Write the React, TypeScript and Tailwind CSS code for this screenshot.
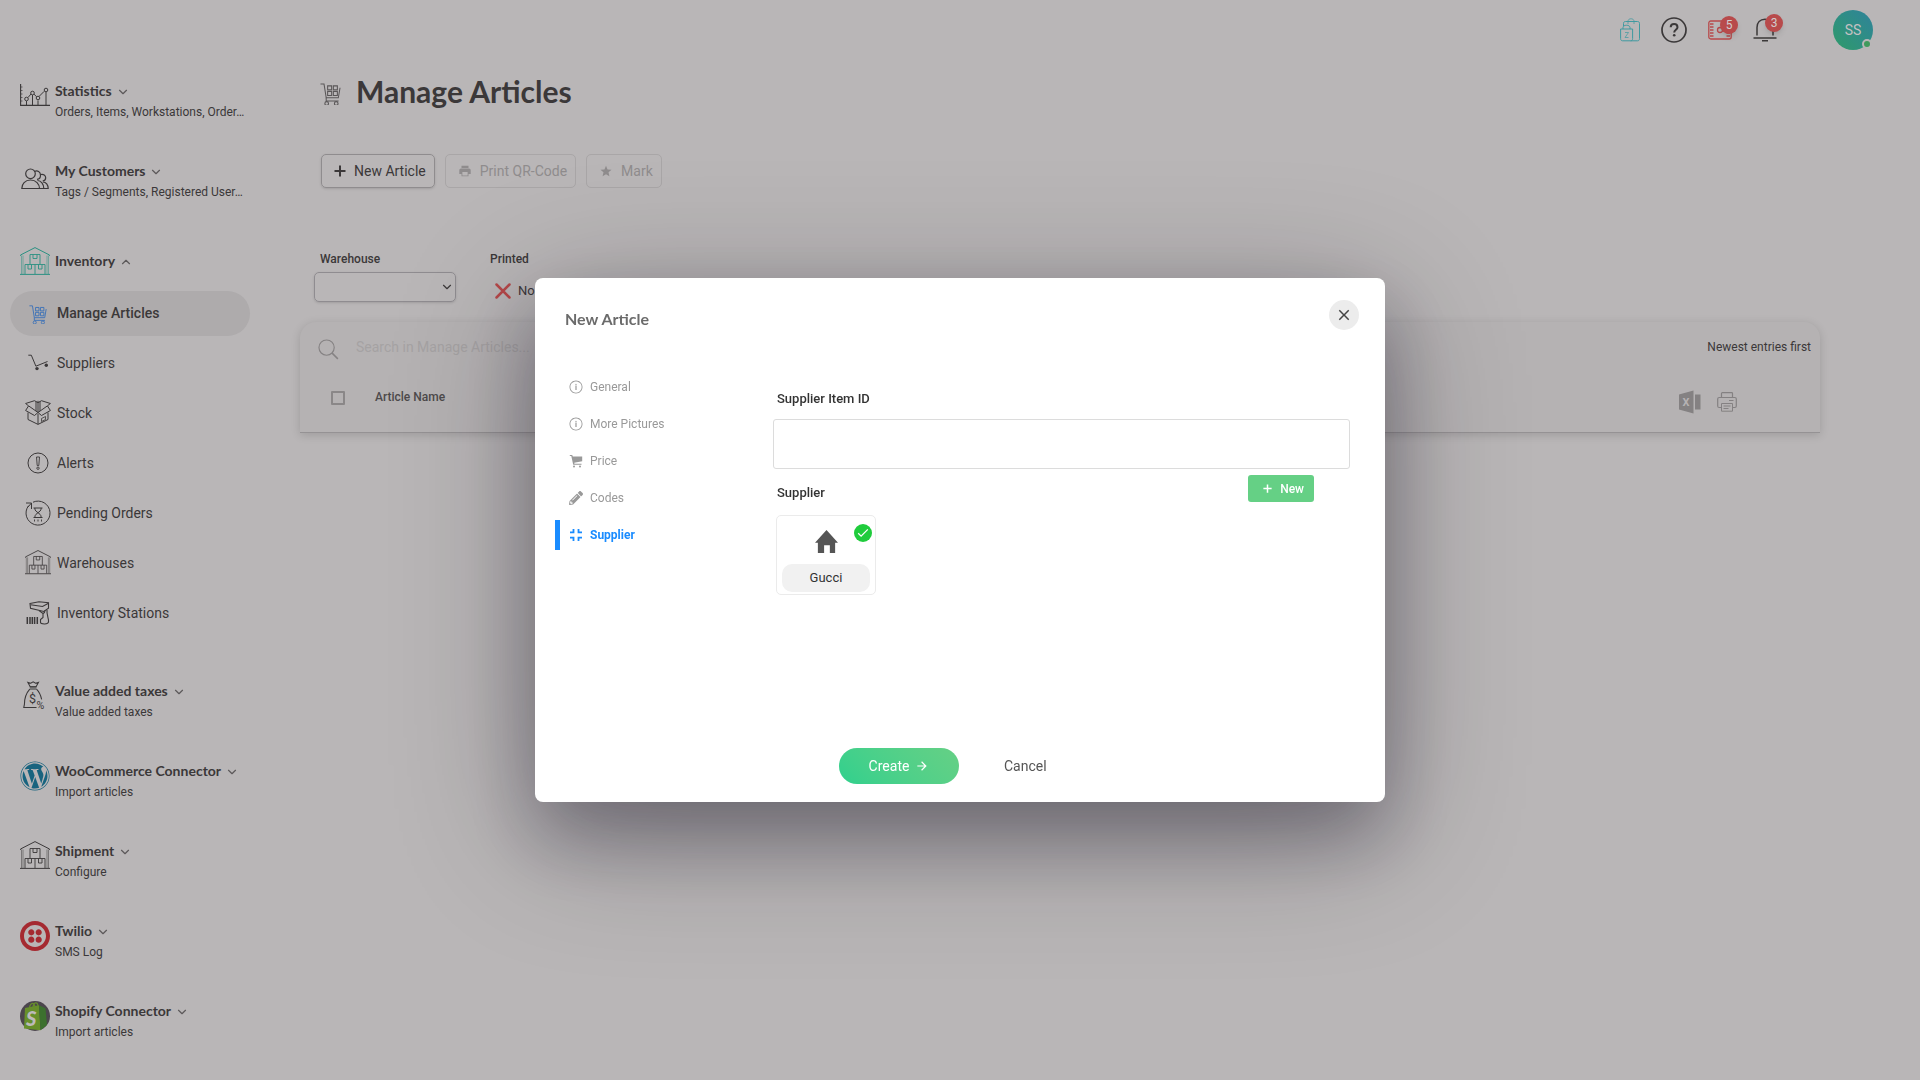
import type { ReactNode } from "react";
import { ChevronDown, ChevronUp } from "lucide-react";
import { FaPencilAlt, FaWordpress } from "react-icons/fa";
import { SiTwilio } from "react-icons/si";
import {
  IoIosInformationCircleOutline,
  IoMdArrowForward,
  IoMdCheckmark,
  IoMdClose,
  IoMdPrint,
  IoMdStar,
} from "react-icons/io";
import { clsx } from "clsx";

type IconProps = { className?: string };

const StatisticsIcon = ({ className }: IconProps) => (
  <svg viewBox="0 0 30 22" fill="none" stroke="currentColor" className={className}>
    <path d="M.6 0v21.4H30" strokeWidth="1.1" />
    <path d="M1 3h1.5M1 6.500h1.500M1 10h1.500M1 13.500h1.500M1 17h1.500" strokeWidth=".7" />
    <path d="M6.500 17v4M12.500 11v10M18 16.500v4.500M26 8v13" strokeWidth="1" />
    <path d="M8 13.500l3-3.500M14 10.200l2.700 2.600M19.200 12.300l5-5" strokeWidth="1" />
    <circle cx="6.500" cy="15" r="1.800" />
    <circle cx="12.500" cy="9" r="1.800" />
    <circle cx="18" cy="14" r="1.800" />
    <circle cx="26" cy="6" r="1.800" />
  </svg>
);

const CustomersIcon = ({ className }: IconProps) => (
  <svg viewBox="0 0 28 22" fill="none" stroke="currentColor" strokeWidth="1.200" className={className}>
    <circle cx="9.500" cy="5.800" r="4.800" />
    <path d="M.8 20.500c0-4.500 3.200-8.500 8.700-8.500s9 4 9 8.500z" />
    <path d="M13.500 3.500c3-1.500 6 .5 6 3.700 0 2.300-1.500 4-3.500 4.200" />
    <path d="M16.500 12.500c3.500 0 6.300 3.500 6.300 8h-4" />
    <path d="M19.700 6.500c2.800-.8 5 1 5 3.200 0 1.800-1.200 3-3 3.300" />
    <path d="M22 14c3 0 5.200 3 5.200 6.500h-4.400" />
  </svg>
);

const WarehouseIcon = ({ className }: IconProps) => (
  <svg viewBox="0 0 30 28" fill="none" stroke="currentColor" strokeWidth="1" className={className}>
    <path d="M.5 8.800V8L15 .6 29.500 8v.8" />
    <path d="M1.500 8.500V27M3 8.500V27M27 8.500V27M28.500 8.500V27" strokeWidth=".5" />
    <path d="M0 27.400h30" />
    <path d="M10 17.500V7.500h10v10" strokeWidth=".9" />
    <path d="M13 7.500v4h4v-4" strokeWidth=".9" />
    <path d="M5 27V17.500h20V27M15 17.500V27" strokeWidth=".9" />
    <path d="M8 17.500v4.500h3.500v-4.500M18.500 17.500v4.500H22v-4.500" strokeWidth=".9" />
  </svg>
);

const ArticlesCartIcon = ({ className }: IconProps) => (
  <svg viewBox="0 0 22 24" fill="none" stroke="currentColor" strokeWidth="1.100" className={className}>
    <path d="M.5 1h3.700l2.300 14.500h12.700L21 5" />
    <path d="M6.500 15.500v3.300h13" />
    <path d="M8 3h4.200v4.200H8zM14 3h4.200v4.200H14zM8 9h4.200v4.200H8zM14 9h4.200v4.200H14z" />
    <circle cx="7" cy="21.400" r="1.900" />
    <circle cx="17" cy="21.400" r="1.900" />
  </svg>
);

const TrolleyIcon = ({ className }: IconProps) => (
  <svg viewBox="0 0 20 17" fill="none" stroke="currentColor" strokeWidth="1" className={className}>
    <path d="M.3 1.200h3l4.600 11L19.500 7.500" />
    <circle cx="9" cy="14.600" r="1.700" fill="currentColor" stroke="none" />
    <circle cx="18.300" cy="11.200" r="1.700" fill="currentColor" stroke="none" />
  </svg>
);

const BoxIcon = ({ className }: IconProps) => (
  <svg viewBox="0 0 26 25" fill="none" stroke="currentColor" strokeWidth="1" strokeLinejoin="round" className={className}>
    <path d="M13 .8v11.400M13 14v10.200M11 1.500v9.500M15 1.500v9.500" />
    <path d="M3.500 5.800l9.500 6.700 9.500-6.700" />
    <path d="M3.500 5.800L.6 3.500 9.500.7l3.500 2 3.500-2 8.900 2.800-2.900 2.300" />
    <path d="M3.500 6L.6 10.500l8.900 5 3.500-3 3.500 3 8.900-5L22.500 6" />
    <path d="M3 12.500v7l10 4.900 10-4.900v-7" />
    <path d="M16.500 18.500l4-2v3l-4 2z" strokeWidth=".8" />
  </svg>
);

const AlertIcon = ({ className }: IconProps) => (
  <svg viewBox="0 0 22 22" fill="none" stroke="currentColor" strokeWidth="1" className={className}>
    <circle cx="11" cy="11" r="10" />
    <path d="M9.500 5h3l-.7 8.500h-1.600z" strokeWidth=".9" />
    <circle cx="11" cy="16.200" r="1.200" strokeWidth=".9" />
  </svg>
);

const PendingIcon = ({ className }: IconProps) => (
  <svg viewBox="0 0 26 26" fill="none" stroke="currentColor" strokeWidth="1" className={className}>
    <path d="M8 2.200A12 12 0 1 1 3.500 5.800M6.500 9V3H1M6.500 3L2.500 7.500" />
    <path d="M8.500 8h9M8.500 17.500h9M9.800 8c0 3 2 3.700 3.200 4.700 1.200-1 3.200-1.700 3.200-4.700M9.800 17.500c0-3 2-3.700 3.200-4.800 1.200 1.100 3.200 1.800 3.200 4.800" />
    <path d="M9.500 19.500v2M13 19.500v2M16.500 19.500v2" strokeWidth=".9" />
  </svg>
);

const ScannerIcon = ({ className }: IconProps) => (
  <svg viewBox="0 0 24 24" fill="none" stroke="currentColor" strokeWidth="1.100" className={className}>
    <path d="M4 2.500L13 .8l9.500 1v5.400l-4.700 3.300L4.500 7.200z" />
    <path d="M4.500 3.800l12 1.700 6-3.300M13 9.500l4 3v4l-2.500 2v3c0 1.500 7.500 2.500 8-.5.500-4-2-6-1.500-12" />
    <path d="M17 12.500c1.500-.5 2-1.500 2-3" />
    <path d="M1.300 16v7M4 16v7M6.300 16v7M8.600 16v7M11.300 16v7" strokeWidth="1.500" />
  </svg>
);

const TaxIcon = ({ className }: IconProps) => (
  <svg viewBox="0 0 24 30" fill="none" stroke="currentColor" strokeWidth="1.100" className={className}>
    <path d="M7.500 6L5 1.500l3 .8L10.500.8l2.500 1.500 3-.8L13.500 6z" />
    <path d="M7 8.300h7M7 6.200h7" />
    <path d="M7 8.500C3 13 1.500 18 1.500 24L.8 27.500H14M14 8.500c2.500 2.500 4.500 7 5.300 10.500" />
    <text x="6.300" y="22.500" fontSize="13" fontFamily="Roboto, sans-serif" fill="currentColor" stroke="none">$</text>
    <text x="14" y="28.500" fontSize="11" fontFamily="Roboto, sans-serif" fill="currentColor" stroke="none">%</text>
  </svg>
);

const ShopifyLogo = ({ className }: IconProps) => (
  <svg viewBox="0 0 30 30" className={className}>
    <circle cx="15" cy="15" r="15" fill="#4c464d" />
    <path d="M5 7l14-2.800 1.500 25L4 27.500z" fill="#678f2a" />
    <path d="M19 4.200l6.500 3L27 24l-6.500 5.200z" fill="#3c702e" />
    <path d="M9.500 7C10 2 14 .5 15 5.500M13 6c.5-5 5-6 5-.5" fill="none" stroke="#678f2a" strokeWidth="1.200" />
    <text x="6" y="25" fontSize="20" fontWeight="900" fontStyle="italic" fontFamily="Lato, sans-serif" fill="#bdbabb">S</text>
  </svg>
);

const BagsIcon = ({ className }: IconProps) => (
  <svg viewBox="0 0 20 24" fill="none" stroke="currentColor" strokeWidth="1" className={className}>
    <path d="M3.500 8V5.500c0-1.300.7-2 2-2h12c1.300 0 2 .7 2 2v15c0 1.500-.7 2.300-2 2.300h-7" />
    <path d="M8 6V3c0-3 6-3 6 0v3" strokeWidth=".7" />
    <path d="M.6 11h12v9.500c0 1.500-.7 2.300-2 2.300h-8c-1.300 0-2-.8-2-2.300zM3 11V9.500c0-3 7-3 7 0V11" />
    <path d="M5 14.500h3.500l-3.500 5h3.500" strokeWidth=".7" />
  </svg>
);

const HelpIcon = ({ className }: IconProps) => (
  <svg viewBox="0 0 26 26" fill="none" stroke="currentColor" strokeWidth="1.700" className={className}>
    <circle cx="13" cy="13" r="12" />
    <path d="M9.700 10.300c0-4.300 6.800-4.300 6.800 0 0 2.500-3.300 2.600-3.300 5.200" strokeWidth="2" />
    <circle cx="13.200" cy="18.300" r="1.300" fill="currentColor" stroke="none" />
  </svg>
);

const FilmIcon = ({ className }: IconProps) => (
  <svg viewBox="0 0 24 20" fill="none" stroke="currentColor" strokeWidth="1.300" className={className}>
    <rect x=".8" y="1" width="22.400" height="18" rx="2" />
    <path d="M2 4h3.500M2 7h3.500M2 10h3.500M2 13h3.500M2 16h3.500M18.500 13H22M18.500 16H22" />
    <circle cx="12" cy="10" r="2.500" />
  </svg>
);

const BellIcon = ({ className }: IconProps) => (
  <svg viewBox="0 0 24 24" fill="none" stroke="currentColor" strokeWidth="1.500" className={className}>
    <path d="M4 17.500V9.500C4 4.500 7 1.200 12 1.200s8 3.300 8 8.300v8" />
    <path d="M.5 20h23M9 22.700h6" />
  </svg>
);

const SearchIcon = ({ className }: IconProps) => (
  <svg viewBox="0 0 22 22" fill="none" stroke="currentColor" strokeWidth="1.200" className={className}>
    <circle cx="9" cy="9" r="8" />
    <path d="M14.800 14.800l6 6" strokeWidth="1.600" />
  </svg>
);

const ExcelIcon = ({ className }: IconProps) => (
  <svg viewBox="0 0 22 24" className={className}>
    <path d="M0 4.500L14.500.5v23L0 19.500zM16 4.500h5.500v15H16z" fill="currentColor" />
    <text x="3.500" y="15.800" fontSize="11" fontWeight="700" fontFamily="Roboto, sans-serif" fill="#b5b2b3">X</text>
  </svg>
);

const PrinterIcon = ({ className }: IconProps) => (
  <svg viewBox="0 0 20 20" fill="none" stroke="currentColor" strokeWidth="1.200" className={className}>
    <path d="M4.500 5.500v-4c0-.5.400-.8.800-.8h9.400c.5 0 .8.300.8.800v4" />
    <path d="M4.500 15.500H2.200c-.9 0-1.500-.6-1.500-1.500V7c0-.9.600-1.500 1.500-1.500h15.600c.9 0 1.500.6 1.500 1.500v7c0 .9-.6 1.500-1.500 1.500h-2.300" />
    <path d="M4.500 11.500h11v7.700h-11zM6.500 14h7M6.500 16.500h5M12 8.500h4.500" strokeWidth="1" />
  </svg>
);

const PlusIcon = ({ className }: IconProps) => (
  <svg viewBox="0 0 12 12" stroke="currentColor" strokeWidth="2" className={className}>
    <path d="M6 .5v11M.5 6h11" />
  </svg>
);

const HouseIcon = ({ className }: IconProps) => (
  <svg viewBox="0 0 24 24" fill="currentColor" className={className}>
    <path d="M12 0l12 13.300h-3V24h-5.500v-8h-6v8H3V13.300H0z" />
  </svg>
);

const CartIcon = ({ className }: IconProps) => (
  <svg viewBox="0 0 14 14" fill="currentColor" className={className}>
    <path d="M.8 1h2.400l.6 1.500h9.400v4.700L5.200 8.700l.3 1h7v1.100H4.200L2.300 2.100H.8z" />
    <circle cx="5" cy="12.400" r="1" />
    <circle cx="11" cy="12.400" r="1" />
  </svg>
);

const ContractIcon = ({ className }: IconProps) => (
  <svg viewBox="0 0 14 14" fill="none" stroke="currentColor" strokeWidth="1.800" className={className}>
    <path d="M1 4.400h3.500V1M9.500 1v3.400H13M1 9.600h3.500V13M9.500 13V9.600H13" />
  </svg>
);

type Section = { title: string; subtitle: string; icon: ReactNode };

const topSections: Section[] = [
  { title: "Statistics", subtitle: "Orders, Items, Workstations, Order…", icon: <StatisticsIcon className="mt-[3px] w-[30px]" /> },
  { title: "My Customers", subtitle: "Tags / Segments, Registered User…", icon: <CustomersIcon className="mt-[7px] w-7" /> },
];

const bottomSections: Section[] = [
  { title: "Value added taxes", subtitle: "Value added taxes", icon: <TaxIcon className="h-[29px]" /> },
  { title: "WooCommerce Connector", subtitle: "Import articles", icon: <FaWordpress className="size-[30px] text-[#18647f]" /> },
  { title: "Shipment", subtitle: "Configure", icon: <WarehouseIcon className="w-[30px]" /> },
  { title: "Twilio", subtitle: "SMS Log", icon: <SiTwilio className="size-[30px] text-[#a52a31]" /> },
  { title: "Shopify Connector", subtitle: "Import articles", icon: <ShopifyLogo className="size-[30px]" /> },
];

const inventoryItems = [
  { label: "Manage Articles", icon: <ArticlesCartIcon className="mt-1 w-[18px] text-[#3a70b8]" />, active: true },
  { label: "Suppliers", icon: <TrolleyIcon className="w-5" /> },
  { label: "Stock", icon: <BoxIcon className="w-[26px]" /> },
  { label: "Alerts", icon: <AlertIcon className="w-[22px]" /> },
  { label: "Pending Orders", icon: <PendingIcon className="w-[26px]" /> },
  { label: "Warehouses", icon: <WarehouseIcon className="w-[26px]" /> },
  { label: "Inventory Stations", icon: <ScannerIcon className="w-6" /> },
];

const modalTabs = [
  { label: "General", icon: <IoIosInformationCircleOutline className="size-4" /> },
  { label: "More Pictures", icon: <IoIosInformationCircleOutline className="size-4" /> },
  { label: "Price", icon: <CartIcon className="size-3.5" /> },
  { label: "Codes", icon: <FaPencilAlt className="size-3.5" /> },
  { label: "Supplier", icon: <ContractIcon className="size-3.5" />, active: true },
];

const SidebarSection = ({ title, subtitle, icon }: Section) => (
  <a href="#" className="flex h-10 items-start gap-[5px]">
    <span className="flex w-[30px] shrink-0 justify-center">{icon}</span>
    <span className="whitespace-nowrap">
      <span className="flex items-center gap-1 font-[Lato,sans-serif] text-sm leading-5 font-bold">
        {title}
        <ChevronDown className="mt-0.5 size-3.5 text-[#5c595a]" />
      </span>
      <span className="block text-xs leading-[22px]">{subtitle}</span>
    </span>
  </a>
);

const Sidebar = () => (
  <aside className="w-[300px] shrink-0">
    <nav className="w-[250px] pt-[21px]">
      <div className="flex flex-col gap-10 pl-5">
        {topSections.map((section) => (
          <SidebarSection key={section.title} {...section} />
        ))}
        <a href="#" className="flex h-10 items-center gap-[5px] font-[Lato,sans-serif] text-sm font-bold">
          <WarehouseIcon className="w-[30px] text-[#2b9182]" />
          <span className="flex items-center gap-1">
            Inventory
            <ChevronUp className="mt-0.5 size-3.5 text-[#5c595a]" />
          </span>
        </a>
      </div>
      <ul className="mt-2.5 flex flex-col gap-[5px] pl-2.5">
        {inventoryItems.map((item) => (
          <li key={item.label}>
            <a
              href="#"
              className={clsx(
                "flex h-[45px] items-center gap-1.5 rounded-full pb-0.5 pl-3.5 text-sm",
                item.active && "bg-[#aeabac] font-medium"
              )}
            >
              <span className="flex w-[27px] shrink-0 justify-center">{item.icon}</span>
              {item.label}
            </a>
          </li>
        ))}
      </ul>
      <div className="mt-[45px] flex flex-col gap-10 pl-5">
        {bottomSections.map((section) => (
          <SidebarSection key={section.title} {...section} />
        ))}
      </div>
    </nav>
  </aside>
);

const CountBadge = ({ count }: { count: number }) => (
  <span className="absolute -top-1 left-3 flex size-[18px] items-center justify-center rounded-full bg-[#b84a4b] text-xs text-[#d0cdce] shadow-md">
    {count}
  </span>
);

const TopBar = () => (
  <header className="flex h-[60px] items-center justify-end pr-[47px]">
    <div className="flex items-center gap-[21px]">
      <button aria-label="Shop">
        <BagsIcon className="w-5 text-[#3f9aa0]" />
      </button>
      <button aria-label="Help">
        <HelpIcon className="w-[26px]" />
      </button>
      <button aria-label="Tutorials" className="relative">
        <FilmIcon className="w-6 text-[#b84a4b]" />
        <CountBadge count={5} />
      </button>
      <button aria-label="Notifications" className="relative">
        <BellIcon className="w-6" />
        <CountBadge count={3} />
      </button>
    </div>
    <button className="relative ml-14 size-10 rounded-full bg-linear-45 from-[#309a68] to-[#30829a] text-sm text-[#c4c1c2]">
      SS
      <span className="absolute right-px bottom-px size-2.5 rounded-full border-2 border-[#b9b6b7] bg-[#409a5c]" />
    </button>
  </header>
);

const toolButton = "flex h-[34px] items-center gap-2 rounded-[5px] border pr-2 pl-3 text-sm";

const ArticlesPage = () => (
  <main className="min-w-0 flex-1 pr-[100px]">
    <div className="flex items-center gap-[15px] pt-[11px] pl-5">
      <ArticlesCartIcon className="mt-1.5 w-[21px] text-[#5a5758]" />
      <h1 className="font-[Lato,sans-serif] text-[30px] leading-10 font-bold">Manage Articles</h1>
    </div>

    <div className="mt-[43px] flex gap-2.5 pl-[21px]">
      <button className={clsx(toolButton, "border-[#8f8c8e] shadow-sm")}>
        <PlusIcon className="size-3" />
        New Article
      </button>
      <button disabled className={clsx(toolButton, "border-[#a9a6a7] text-[#8f8c8d]")}>
        <IoMdPrint className="size-3.5" />
        Print QR-Code
      </button>
      <button disabled className={clsx(toolButton, "border-[#a9a6a7] text-[#8f8c8d]")}>
        <IoMdStar className="size-3.5" />
        Mark
      </button>
    </div>

    <div className="mt-[61px] flex gap-[34px] pl-3.5">
      <div>
        <label htmlFor="warehouse" className="block pl-1.5 text-xs leading-5 font-medium">
          Warehouse
        </label>
        <div className="relative mt-[3px]">
          <select id="warehouse" className="h-[30px] w-[142px] appearance-none rounded-[5px] border border-[#8f8c90] shadow-sm">
            <option value="" />
          </select>
          <ChevronDown className="pointer-events-none absolute top-2 right-0.5 size-3.5" />
        </div>
      </div>
      <div>
        <span className="block text-xs leading-5 font-medium">Printed</span>
        <button className="mt-3 flex items-center gap-[7px] pl-[5px] text-[13px] leading-5">
          <svg viewBox="0 0 16 16" className="size-4" stroke="#b64849" strokeWidth="2.500" strokeLinecap="round">
            <path d="M1.500 1.500l13 13M14.500 1.500l-13 13" />
          </svg>
          No
        </button>
      </div>
    </div>

    <section className="mt-5 rounded-t-2xl border-b border-[#959294] bg-[#b5b2b3] shadow-[0_2px_10px_rgba(0,0,0,0.15)]">
      <div className="flex h-[50px] items-center pr-[9px] pl-[18px]">
        <SearchIcon className="mt-1 size-[21px] text-[#858283]" />
        <input
          type="search"
          aria-label="Search"
          placeholder="Search in Manage Articles..."
          className="ml-[17px] flex-1 bg-transparent text-sm placeholder:text-[#a5a2a3]"
        />
        <button className="text-xs">Newest entries first</button>
      </div>
      <table className="w-full text-xs">
        <thead>
          <tr className="h-[60px] text-left align-top">
            <th className="w-[75px] pt-[19px] pl-[31px] font-medium">
              <input type="checkbox" aria-label="Select all" className="block size-3.5 appearance-none rounded-[1px] border-2 border-[#8a8788]" />
            </th>
            <th className="pt-[17px] font-medium text-[#4d4a4b]">Article Name</th>
            <th className="pt-[18px] pr-[83px] text-[#848182]">
              <div className="flex items-center justify-end gap-4">
                <button aria-label="Export to Excel">
                  <ExcelIcon className="w-[22px]" />
                </button>
                <button aria-label="Print">
                  <PrinterIcon className="w-5" />
                </button>
              </div>
            </th>
          </tr>
        </thead>
      </table>
    </section>
  </main>
);

const NewArticleModal = () => (
  <div className="fixed inset-0 flex items-center justify-center">
    <div
      role="dialog"
      aria-labelledby="modal-title"
      className="w-[850px] rounded-lg bg-white pt-[22px] pb-[18px] text-[#333] shadow-[0_30px_140px_rgba(20,15,25,0.33),0_35px_70px_rgba(40,38,60,0.32)]"
    >
      <div className="flex justify-between pr-[26px] pl-[30px]">
        <h2 id="modal-title" className="mt-[7px] font-[Lato,sans-serif] text-base leading-6 font-bold text-[#6b6b6b]">
          New Article
        </h2>
        <button aria-label="Close" className="flex size-[30px] items-center justify-center rounded-full bg-[#ececec]">
          <IoMdClose className="size-[18px] text-[#444]" />
        </button>
      </div>

      <div className="mt-[41px] flex min-h-[376px] pr-[35px] pl-5">
        <ul className="w-[218px] shrink-0">
          {modalTabs.map(({ label, icon, active }) => (
            <li key={label} className="mb-[7px]">
              <button
                className={clsx(
                  "flex h-[30px] items-center gap-1.5 border-l-[5px] pl-[7px] text-xs",
                  active ? "border-[#1a8cff] font-bold text-[#1a8cff]" : "border-transparent text-[#999]"
                )}
              >
                <span className="flex w-[17px] justify-center">{icon}</span>
                {label}
              </button>
            </li>
          ))}
        </ul>

        <div className="flex-1 pt-[17px]">
          <label htmlFor="supplier-item-id" className="block pl-1 text-[13px] leading-5 font-medium">
            Supplier Item ID
          </label>
          <input id="supplier-item-id" className="mt-2.5 block h-[50px] w-full rounded-[3px] border border-[#dcdcdc] px-3 text-sm" />
          <div className="mt-1.5 flex items-start justify-between pr-9 pl-1">
            <h3 className="mt-2 text-[13px] leading-5 font-medium">Supplier</h3>
            <button className="flex h-[27px] items-center gap-2 rounded-[3px] bg-[#65d085] pr-2.5 pl-[15px] text-xs font-medium text-white">
              <PlusIcon className="size-[9px]" />
              New
            </button>
          </div>
          <button className="relative mt-3 ml-[3px] flex h-20 w-[100px] flex-col items-center rounded-[5px] border border-[#ebebeb] pt-3.5">
            <HouseIcon className="size-[23px] text-[#555]" />
            <span className="absolute top-2 right-[3px] flex size-[18px] items-center justify-center rounded-full bg-[#1fcc3c]">
              <IoMdCheckmark className="size-3.5 text-white" />
            </span>
            <span className="mt-[11px] flex h-7 w-[88px] items-center justify-center rounded-[10px] bg-[#f1f1f1] text-[13px]">Gucci</span>
          </button>
        </div>
      </div>

      <div className="flex items-center gap-[45px] pl-[304px] text-sm">
        <button className="flex h-9 w-[120px] items-center justify-center gap-1.5 rounded-full bg-linear-45 from-[#2fd08d] to-[#65d085] text-white">
          Create
          <IoMdArrowForward className="size-3.5" />
        </button>
        <button className="text-[#555]">Cancel</button>
      </div>
    </div>
  </div>
);

export default function App() {
  return (
    <div className="min-h-screen overflow-hidden bg-[#b9b6b7] font-[Roboto,sans-serif] text-[#3b3839]">
      <TopBar />
      <div className="flex">
        <Sidebar />
        <ArticlesPage />
      </div>
      <NewArticleModal />
    </div>
  );
}
